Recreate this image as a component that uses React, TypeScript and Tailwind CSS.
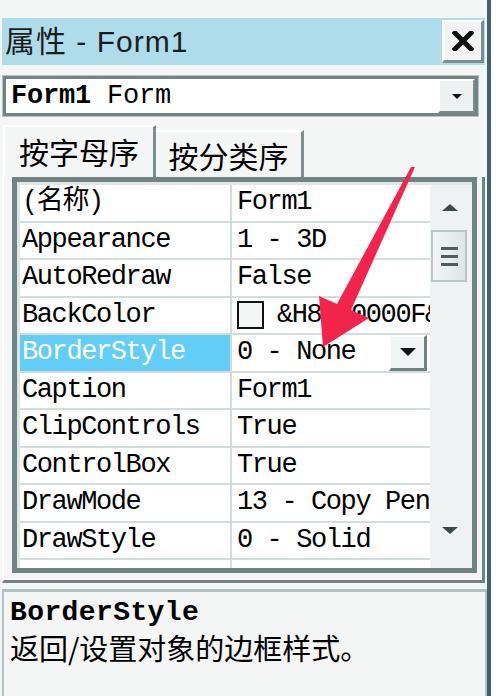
import React from "react";

const mono = "font-['Liberation_Mono','Noto_Sans_CJK_SC',monospace]";

const rows: { name: string; value: string }[] = [
	{ name: "(名称)", value: "Form1" },
	{ name: "Appearance", value: "1 - 3D" },
	{ name: "AutoRedraw", value: "False" },
	{ name: "BackColor", value: "&H8000000F&" },
	{ name: "BorderStyle", value: "0 - None" },
	{ name: "Caption", value: "Form1" },
	{ name: "ClipControls", value: "True" },
	{ name: "ControlBox", value: "True" },
	{ name: "DrawMode", value: "13 - Copy Pen" },
	{ name: "DrawStyle", value: "0 - Solid" },
];

function DownTri({ w, h, color = "#111" }: { w: number; h: number; color?: string }) {
	return (
		<svg width={w} height={h} viewBox={`0 0 ${w} ${h}`}>
			<polygon points={`0,0 ${w},0 ${w / 2},${h}`} fill={color} />
		</svg>
	);
}

function PropRow({ name, value }: { name: string; value: string }) {
	const selected = name === "BorderStyle";
	return (
		<div className="flex h-[37.5px] border-b-2 border-[#d3dcdc] bg-white">
			<div
				className={`w-[212px] shrink-0 flex items-center pl-[2px] border-r-2 border-[#d3dcdc] ${
					selected ? "bg-[#62cdf6] text-white" : "text-black"
				}`}
			>
				<span className="whitespace-nowrap">{name}</span>
			</div>
			<div className="flex-1 flex items-center pl-[5px] overflow-hidden whitespace-nowrap text-black">
				{name === "BackColor" && (
					<div className="w-[27px] h-[28px] border-2 border-[#111] bg-[#f4f6f5] mr-[13px] shrink-0" />
				)}
				<span className="flex-1">{value}</span>
				{selected && (
					<div className="w-[38px] h-full mr-[3px] bg-[#f1f4f4] border-2 border-t-white border-l-white border-r-[3px] border-b-[3px] border-r-[#6f8383] border-b-[#6f8383] flex items-center justify-center shrink-0">
						<DownTri w={16} h={8} />
					</div>
				)}
			</div>
		</div>
	);
}

export default function App() {
	return (
		<div className="relative w-[496px] h-[696px] overflow-hidden bg-white flex">
			<div className="w-[487px] h-full bg-[#f4f6f5] flex flex-col pt-[18px]">
				{/* title bar */}
				<div className="ml-[2px] w-[483px] h-[47px] bg-[#afdcea] flex items-center justify-between pl-[3px] pr-[1px]">
					<span className="font-['Liberation_Sans','Noto_Sans_CJK_SC',sans-serif] text-[30px] leading-none tracking-[1px] text-[#1c1c1c]">
						属性 - Form1
					</span>
					<div className="w-[42px] h-[43px] bg-[#f2f4f4] border-2 border-t-white border-l-white border-r-[3px] border-b-[3px] border-r-[#7d8e8e] border-b-[#7d8e8e] flex items-center justify-center">
						<svg width="22" height="20" viewBox="0 0 22 20">
							<path d="M3 2 L19 18 M19 2 L3 18" stroke="#111" strokeWidth="5" strokeLinecap="square" />
						</svg>
					</div>
				</div>

				{/* object combo */}
				<div className="mt-[10px] ml-[2px] w-[477px] h-[42px] border border-[#b8c4c4]">
					<div className="h-full border-[3px] border-[#718484] bg-white flex items-center">
						<span className={`${mono} flex-1 pl-[5px] text-[27px] leading-none tracking-[-0.2px] text-black whitespace-nowrap`}>
							<b>Form1</b> Form
						</span>
						<div className="w-[37px] h-full bg-[#eef1f1] border-2 border-t-white border-l-white border-r-[#7a8b8b] border-b-[#7a8b8b] flex items-center justify-center">
							<DownTri w={10} h={5} />
						</div>
					</div>
				</div>

				{/* tabs */}
				<div className="mt-[8px] h-[52px] flex items-end font-['Noto_Sans_CJK_SC',sans-serif] text-[30px] leading-none text-black">
					<div className="ml-[3px] w-[153px] h-[52px] border-t-2 border-l-2 border-white border-r-[3px] border-r-[#7d8e8e] flex items-center justify-center pb-[2px]">
						按字母序
					</div>
					<div className="w-[148px] h-[47px] border-t-2 border-t-white border-r-[3px] border-r-[#7d8e8e] flex items-center justify-center">
						按分类序
					</div>
				</div>

				{/* property grid panel */}
				<div className="ml-[2px] w-[483px] border-l-2 border-r-[3px] border-b-[3px] border-[#718484] border-l-white pl-[8px] pr-[5px] pb-[7px]">
					<div className="h-[396px] border-[5px] border-[#6f8383] bg-[#dfe6e6] pt-[3px] pl-[3px] flex">
						<div className={`${mono} w-[410px] flex flex-col text-[27px] leading-none tracking-[-1.4px]`}>
							{rows.map((r) => (
								<PropRow key={r.name} name={r.name} value={r.value} />
							))}
							<div className="flex-1 flex bg-white">
								<div className="w-[212px] border-r-2 border-[#d3dcdc]" />
							</div>
						</div>
						<div className="w-[42px] bg-[#eef2f2] flex flex-col items-start">
							<div className="w-[40px] h-[45px] flex items-center justify-center">
								<svg width="16" height="7" viewBox="0 0 16 7">
									<polygon points="8,0 16,7 0,7" fill="#3a4a4a" />
								</svg>
							</div>
							<div className="ml-[1px] w-[36px] h-[52px] border-2 border-[#b8c6c6] bg-gradient-to-r from-[#f3f5f5] to-[#dfe5e5] flex flex-col items-center justify-center gap-[5px]">
								<div className="w-[17px] h-[3px] bg-[#4d5d5d]" />
								<div className="w-[17px] h-[3px] bg-[#4d5d5d]" />
								<div className="w-[17px] h-[3px] bg-[#4d5d5d]" />
							</div>
							<div className="flex-1" />
							<div className="w-[40px] h-[40px] flex items-start justify-center pt-[2px] mb-[3px]">
								<DownTri w={16} h={7} color="#3a4a4a" />
							</div>
						</div>
					</div>
				</div>

				{/* description */}
				<div className="mt-[6px] ml-[2px] w-[485px] flex-1 border-t-[3px] border-x-2 border-[#b3c3c3] pl-[6px] pt-[6px]">
					<div className={`${mono} font-bold text-[28px] leading-[30px] tracking-[0.4px] text-black`}>BorderStyle</div>
					<div className="font-['Noto_Sans_CJK_SC',sans-serif] text-[29px] leading-[34px] mt-[2px] text-black">
						返回/设置对象的边框样式。
					</div>
				</div>
			</div>
			<div className="w-[4px] h-full bg-[#3e6179]" />
			<div className="flex-1 bg-white" />

			{/* red annotation arrow */}
			<svg className="absolute inset-0 pointer-events-none" width="496" height="696" viewBox="0 0 496 696">
				<polygon
					points="411,167 415,167 351,310 369,318 323,347 319,296 337,304"
					fill="#f3244b"
				/>
			</svg>
		</div>
	);
}
